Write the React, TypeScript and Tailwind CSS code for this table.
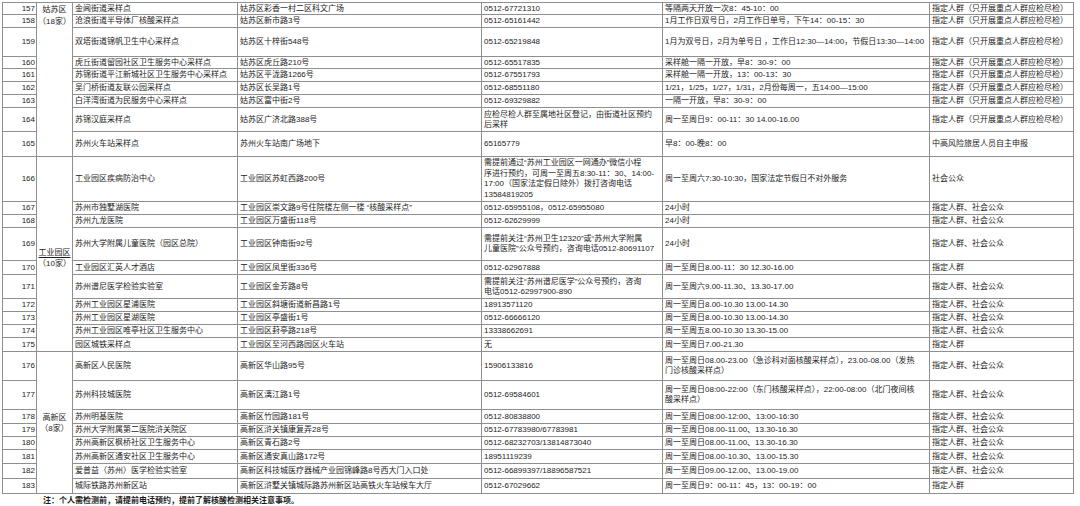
import React from 'react';

interface Row {
  no: number;
  h: number;
  name: string;
  addr: string;
  phone: string[];
  time: string[];
  crowd: string;
}

const KEY = '指定人群（只开展重点人群应检尽检）';
const BOTH = '指定人群、社会公众';

const ROWS: Row[] = [
  { no: 157, h: 12, name: '金阊街道采样点', addr: '姑苏区彩香一村二区科文广场', phone: ['0512-67721310'], time: ['等隔两天开放一次8：45-10：00'], crowd: KEY },
  { no: 158, h: 13, name: '沧浪街道半导体厂核酸采样点', addr: '姑苏区新市路3号', phone: ['0512-65161442'], time: ['1月工作日双号日，2月工作日单号，下午14：00-15：30'], crowd: KEY },
  { no: 159, h: 29, name: '双塔街道锦帆卫生中心采样点', addr: '姑苏区十梓街548号', phone: ['0512-65219848'], time: ['1月为双号日，2月为单号日 ，工作日12:30—14:00，节假日13:30—14:00'], crowd: KEY },
  { no: 160, h: 12, name: '虎丘街道留园社区卫生服务中心采样点', addr: '姑苏区虎丘路210号', phone: ['0512-65517835'], time: ['采样舱一隔一开放，早8：30-9：00'], crowd: KEY },
  { no: 161, h: 13, name: '苏锦街道平江新城社区卫生服务中心采样点', addr: '姑苏区平泷路1266号', phone: ['0512-67551793'], time: ['采样舱一隔一开放，13：00-13：30'], crowd: KEY },
  { no: 162, h: 13, name: '吴门桥街道友联公园采样点', addr: '姑苏区长吴路1号', phone: ['0512-68551180'], time: ['1/21，1/25，1/27，1/31，2月份每周一，五14:00—15:00'], crowd: KEY },
  { no: 163, h: 13, name: '白洋湾街道为民服务中心采样点', addr: '姑苏区富中街2号', phone: ['0512-69329882'], time: ['一隔一开放，早8：30-9：00'], crowd: KEY },
  { no: 164, h: 24, name: '苏锦汉庭采样点', addr: '姑苏区广济北路388号', phone: ['应检尽检人群至属地社区登记，由街道社区预约', '后采样'], time: ['周一至周日9：00-11：30 14.00-16.00'], crowd: KEY },
  { no: 165, h: 25, name: '苏州火车站采样点', addr: '苏州火车站南广场地下', phone: ['65165779'], time: ['早8：00-晚8：00'], crowd: '中高风险旅居人员自主申报' },
  { no: 166, h: 45, name: '工业园区疾病防治中心', addr: '工业园区苏虹西路200号', phone: ['需提前通过“苏州工业园区一网通办”微信小程', '序进行预约，可周一至周五8:30-11：30、14:00-', '17:00（国家法定假日除外）拨打咨询电话', '13584819205'], time: ['周一至周六7:30-10:30，国家法定节假日不对外服务'], crowd: '社会公众' },
  { no: 167, h: 13, name: '苏州市独墅湖医院', addr: '工业园区崇文路9号住院楼左侧一楼  “核酸采样点”', phone: ['0512-65955108，0512-65955080'], time: ['24小时'], crowd: BOTH },
  { no: 168, h: 13, name: '苏州九龙医院', addr: '工业园区万盛街118号', phone: ['0512-62629999'], time: ['24小时'], crowd: BOTH },
  { no: 169, h: 33, name: '苏州大学附属儿童医院（园区总院）', addr: '工业园区钟南街92号', phone: ['需提前关注“苏州卫生12320”或“苏州大学附属', '儿童医院”公众号预约，咨询电话0512-80691107'], time: ['24小时'], crowd: BOTH },
  { no: 170, h: 14, name: '工业园区汇英人才酒店', addr: '工业园区凤里街336号', phone: ['0512-62967888'], time: ['周一至周日8.00-11：30 12.30-16.00'], crowd: '指定人群' },
  { no: 171, h: 24, name: '苏州谱尼医学检验实验室', addr: '工业园区金芳路8号', phone: ['需提前关注“苏州谱尼医学”公众号预约，咨询', '电话0512-62997900-890'], time: ['周一至周六9.00-11.30、13.30-17.00'], crowd: BOTH },
  { no: 172, h: 13, name: '苏州工业园区星浦医院', addr: '工业园区斜塘街道新昌路1号', phone: ['18913571120'], time: ['周一至周日8.00-10.30 13.00-14.30'], crowd: BOTH },
  { no: 173, h: 13, name: '苏州工业园区星湖医院', addr: '工业园区亭盛街1号', phone: ['0512-66666120'], time: ['周一至周日8.00-10.30 13.00-14.30'], crowd: BOTH },
  { no: 174, h: 13, name: '苏州工业园区唯亭社区卫生服务中心', addr: '工业园区葑亭路218号', phone: ['13338662691'], time: ['周一至周五8.00-10.30 13.30-15.00'], crowd: BOTH },
  { no: 175, h: 14, name: '园区城铁采样点', addr: '工业园区至河西路园区火车站', phone: ['无'], time: ['周一至周日7.00-21.30'], crowd: '指定人群' },
  { no: 176, h: 29, name: '高新区人民医院', addr: '高新区华山路95号', phone: ['15906133816'], time: ['周一至周日08.00-23.00（急诊科对面核酸采样点），23.00-08.00（发热', '门诊核酸采样点）'], crowd: BOTH },
  { no: 177, h: 29, name: '苏州科技城医院', addr: '高新区漓江路1号', phone: ['0512-69584601'], time: ['周一至周日08:00-22:00（东门核酸采样点），22:00-08:00（北门夜间核', '酸采样点）'], crowd: BOTH },
  { no: 178, h: 14, name: '苏州明基医院', addr: '高新区竹园路181号', phone: ['0512-80838800'], time: ['周一至周日08:00-12:00、13:00-16:30'], crowd: BOTH },
  { no: 179, h: 13, name: '苏州大学附属第二医院浒关院区', addr: '高新区浒关镇康复弄28号', phone: ['0512-67783980/67783981'], time: ['周一至周日08.00-11.00、13.30-16.30'], crowd: BOTH },
  { no: 180, h: 13, name: '苏州高新区枫桥社区卫生服务中心', addr: '高新区青石路2号', phone: ['0512-68232703/13814873040'], time: ['周一至周日08.00-11.00、13.30-16.30'], crowd: BOTH },
  { no: 181, h: 14, name: '苏州高新区通安社区卫生服务中心', addr: '高新区通安真山路172号', phone: ['18951119239'], time: ['周一至周日08.00-10.30、13.00-15.30'], crowd: BOTH },
  { no: 182, h: 15, name: '爱普益（苏州）医学检验实验室', addr: '高新区科技城医疗器械产业园锦峰路8号西大门入口处', phone: ['0512-66899397/18896587521'], time: ['周一至周日09.00-12.00、13.00-19.00'], crowd: BOTH },
  { no: 183, h: 15, name: '城际铁路苏州新区站', addr: '高新区浒墅关镇城际路苏州新区站高铁火车站候车大厅', phone: ['0512-67029662'], time: ['周一至周日9：00-11：45，13：00-19：00'], crowd: '指定人群' },
];

// merged district cells, keyed by the first row number
const DISTRICTS: Record<number, { span: number; lines: string[]; cls: string }> = {
  157: { span: 9, lines: ['姑苏区', '（18家）'], cls: 'align-top pt-[1px] leading-[12px]' },
  166: { span: 10, lines: ['工业园区', '（10家）'], cls: 'align-middle pt-[8px] leading-[11px]' },
  176: { span: 8, lines: ['高新区', '（8家）'], cls: 'align-middle leading-[11px]' },
};

const cell = 'border border-[#8f8f8f] px-[2px] py-0 align-middle whitespace-nowrap overflow-hidden leading-[10px]';

const Lines: React.FC<{ lines: string[]; tight?: boolean }> = ({ lines, tight }) => (
  <div className={tight ? 'leading-[10.5px]' : 'leading-[10px]'}>
    {lines.map((l, i) => (
      <div key={i}>{l}</div>
    ))}
  </div>
);

export default function App() {
  return (
    <div className="w-[1080px] h-[506px] bg-white overflow-hidden font-['Liberation_Sans','Noto_Sans_CJK_SC',sans-serif] text-[8px] leading-[10px] text-[#1c1c1c]">
      <table className="table-fixed border-collapse ml-[2px] mt-[2px] w-[1071px]">
        <colgroup>
          <col className="w-[34px]" />
          <col className="w-[36px]" />
          <col className="w-[165px]" />
          <col className="w-[244px]" />
          <col className="w-[181px]" />
          <col className="w-[267px]" />
          <col className="w-[144px]" />
        </colgroup>
        <tbody>
          {ROWS.map(r => {
            const d = DISTRICTS[r.no];
            return (
              <tr key={r.no} style={{ height: r.h }}>
                <td className={`${cell} text-right pr-[1px]`}>{r.no}</td>
                {d && (
                  <td rowSpan={d.span} className={`border border-[#8f8f8f] px-0 text-center whitespace-nowrap ${d.cls}`}>
                    {d.lines.map((l, i) => (
                      <div key={i} className={r.no === 166 && i === 0 ? 'underline underline-offset-2' : ''}>
                        {l}
                      </div>
                    ))}
                  </td>
                )}
                <td className={cell}>{r.name}</td>
                <td className={cell}>{r.addr}</td>
                <td className={cell}>
                  <Lines lines={r.phone} tight={r.no === 166} />
                </td>
                <td className={cell}>
                  <Lines lines={r.time} />
                </td>
                <td className={cell}>{r.crowd}</td>
              </tr>
            );
          })}
        </tbody>
      </table>
      <p className="ml-[43px] mt-[2px] font-bold leading-[10px]">
        注：个人需检测前，请提前电话预约，提前了解核酸检测相关注意事项。
      </p>
    </div>
  );
}
